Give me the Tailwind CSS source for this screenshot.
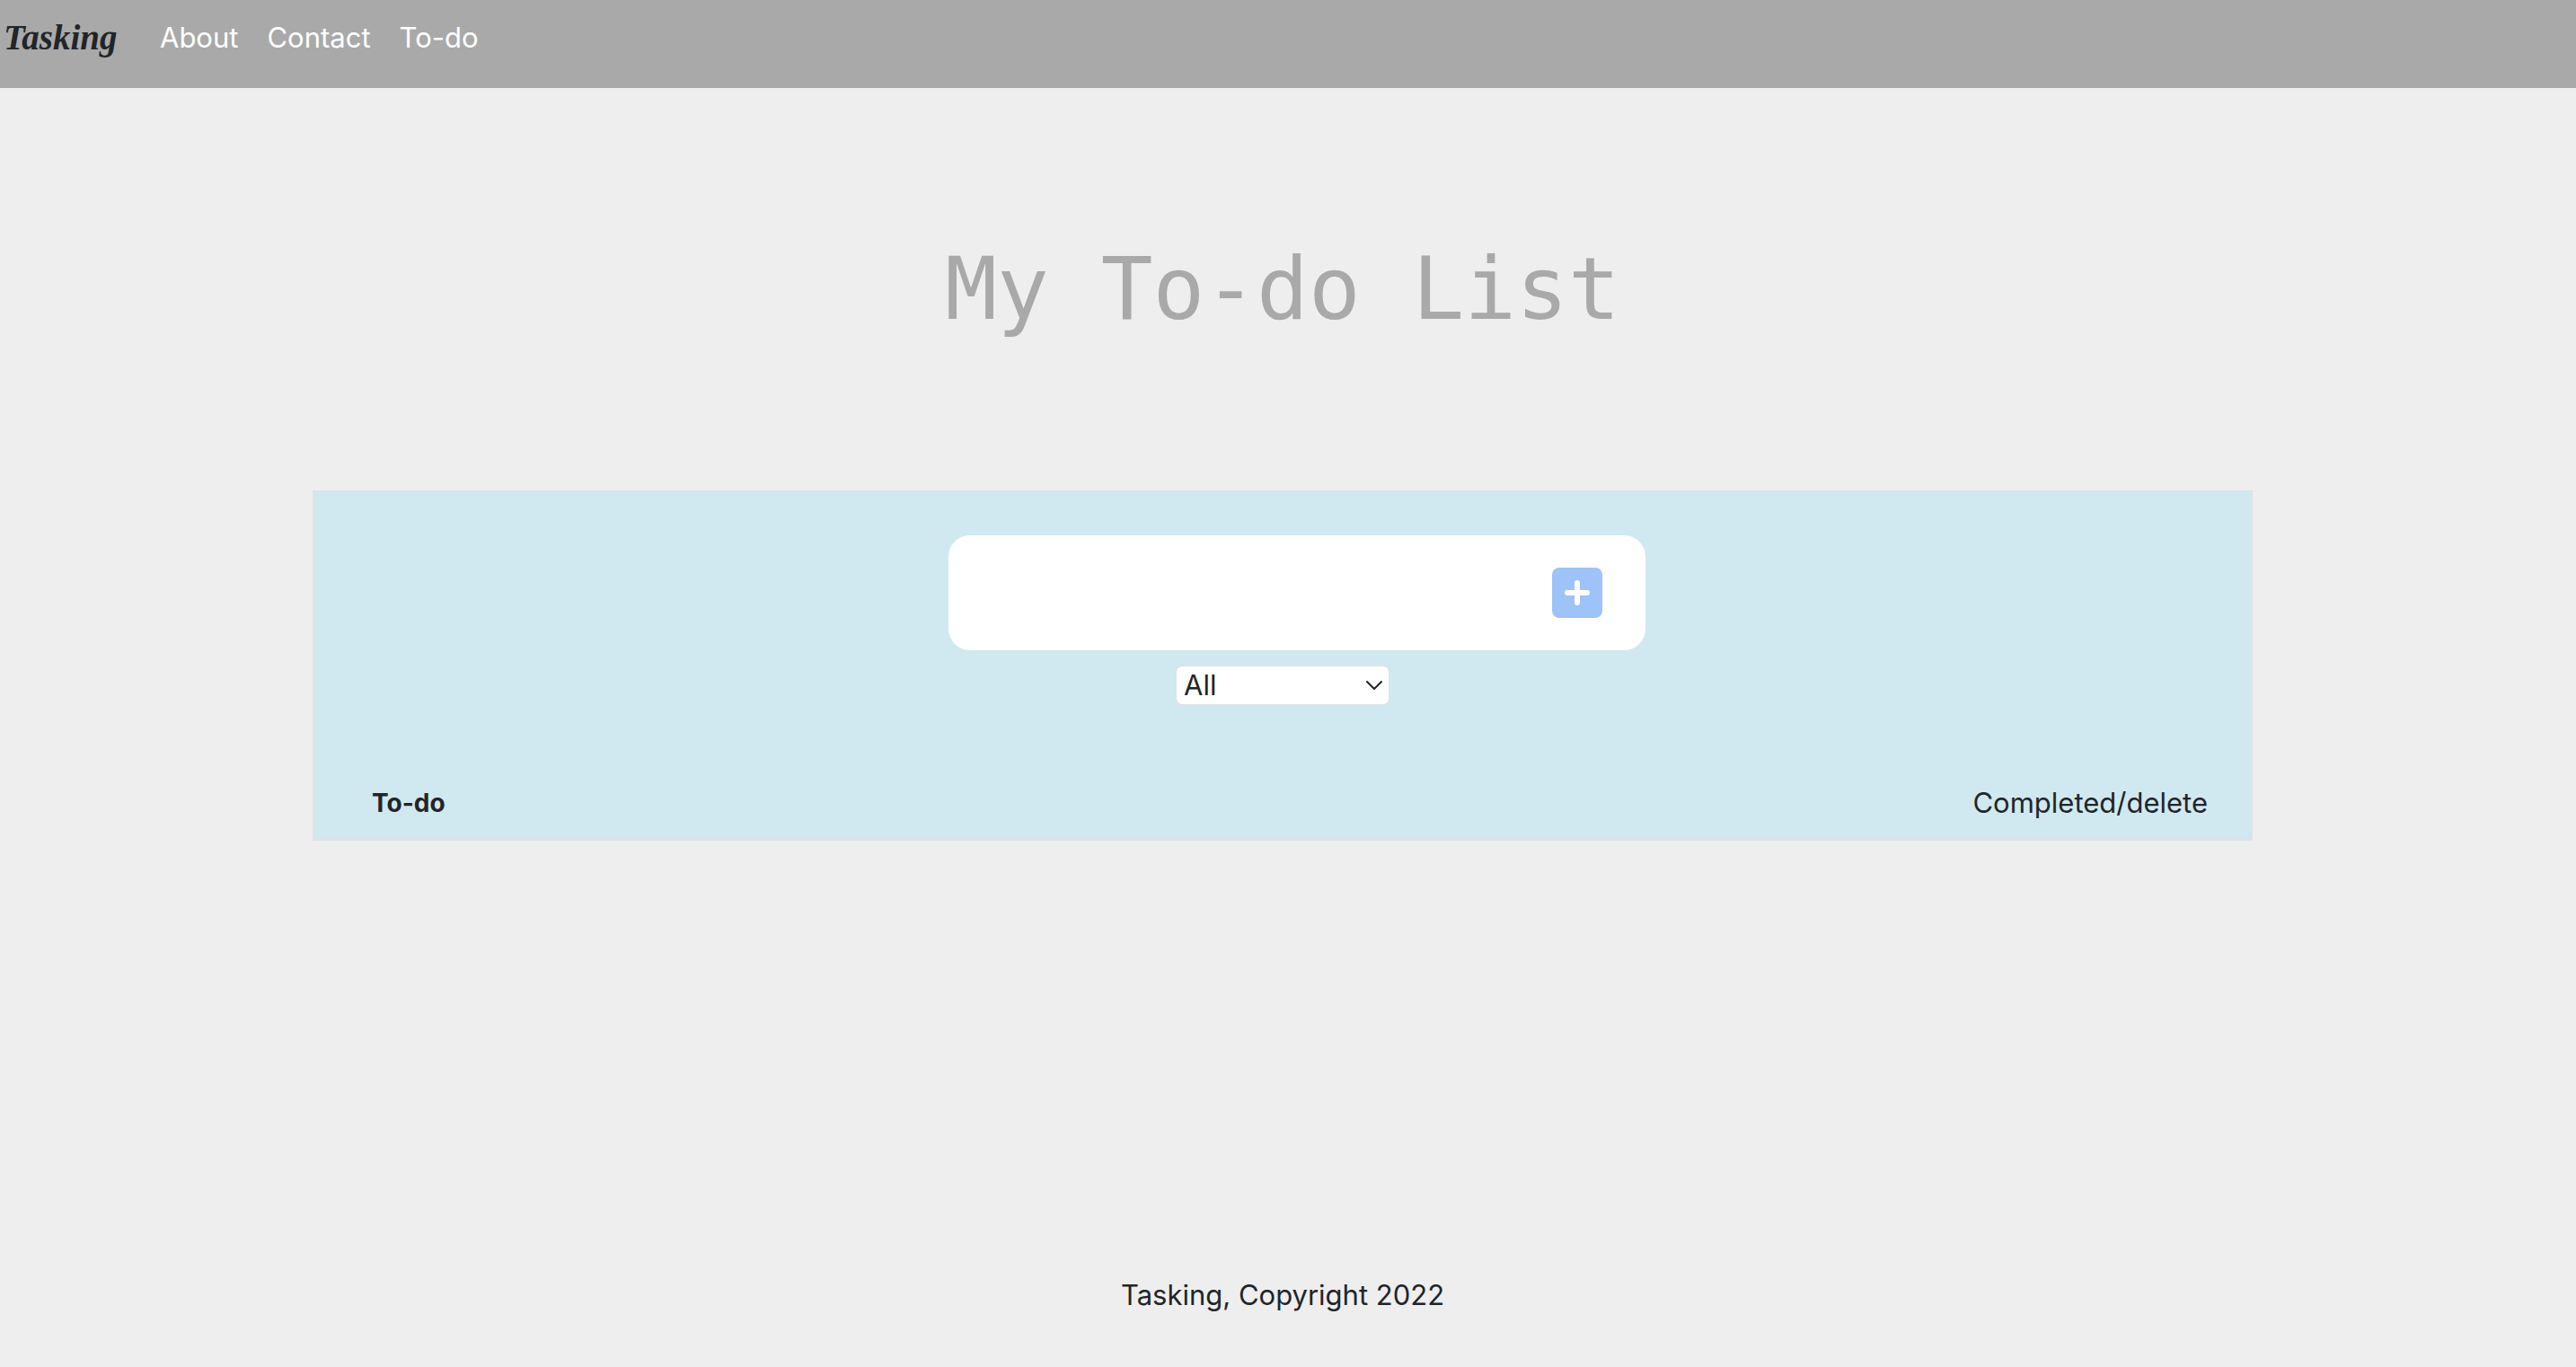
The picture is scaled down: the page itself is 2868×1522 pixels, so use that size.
<!DOCTYPE html>
<html lang="en">
<head>
<meta charset="utf-8">
<meta name="viewport" content="width=device-width, initial-scale=1">
<title>Tasking</title>
<script src="https://cdn.jsdelivr.net/npm/@tailwindcss/browser@4"></script>
</head>
<body class="min-h-screen flex flex-col bg-[#eeeeee] text-[#212529] font-['Inter',sans-serif] text-[31px] leading-12">
  <nav class="flex items-start bg-[#a9a9a9] pt-[18px] pb-8 pl-1">
    <a href="#" class="w-[174px] font-['Liberation_Serif',serif] font-bold italic text-[39px]">Tasking</a>
    <ul class="flex gap-8 text-white">
      <li><a href="#">About</a></li>
      <li><a href="#">Contact</a></li>
      <li><a href="#">To-do</a></li>
    </ul>
  </nav>

  <div class="grow flex flex-col pr-3">
    <header class="pt-40 pb-40">
      <h1 class="text-center font-['DejaVu_Sans_Mono',monospace] text-8xl leading-32 text-[#a9a9a9]">My To-do List</h1>
    </header>

    <main class="w-full max-w-[2160px] mx-auto border-2 border-b-4 border-[#dee2e6] bg-[#d0e9f0]">
      <form class="flex flex-col items-center pt-12">
        <div class="flex items-center w-[776px] h-32 ml-8 pr-12 bg-white rounded-3xl">
          <input type="text" aria-label="New task" class="grow h-full px-6 bg-transparent outline-none">
          <button type="button" aria-label="Add task" class="size-14 flex items-center justify-center rounded-lg bg-[#9dc3f8]">
            <svg class="size-7" viewBox="0 0 28 28" fill="none" stroke="#fff" stroke-width="6" stroke-linecap="round"><path d="M14 3v22M3 14h22"/></svg>
          </button>
        </div>
        <div class="relative mt-4">
          <select aria-label="Filter tasks" class="appearance-none block w-60 h-[46px] pl-2 pr-10 bg-white border-2 border-[#dee2e6] rounded-lg leading-10">
            <option>All</option>
            <option>Completed</option>
            <option>Uncompleted</option>
          </select>
          <svg class="absolute right-2 top-[13px] size-5 pointer-events-none" viewBox="0 0 20 20" fill="none" stroke="#212529" stroke-width="2" stroke-linecap="round" stroke-linejoin="round"><path d="M2 6l8 8 8-8"/></svg>
        </div>
      </form>
      <div class="flex items-center justify-between pt-[84px] pb-[14px] pl-16 pr-12">
        <h2 class="text-[28px] font-bold">To-do</h2>
        <p>Completed/delete</p>
      </div>
    </main>

    <footer class="mt-auto pb-14 text-center">
      <p>Tasking, Copyright 2022</p>
    </footer>
  </div>
</body>
</html>
